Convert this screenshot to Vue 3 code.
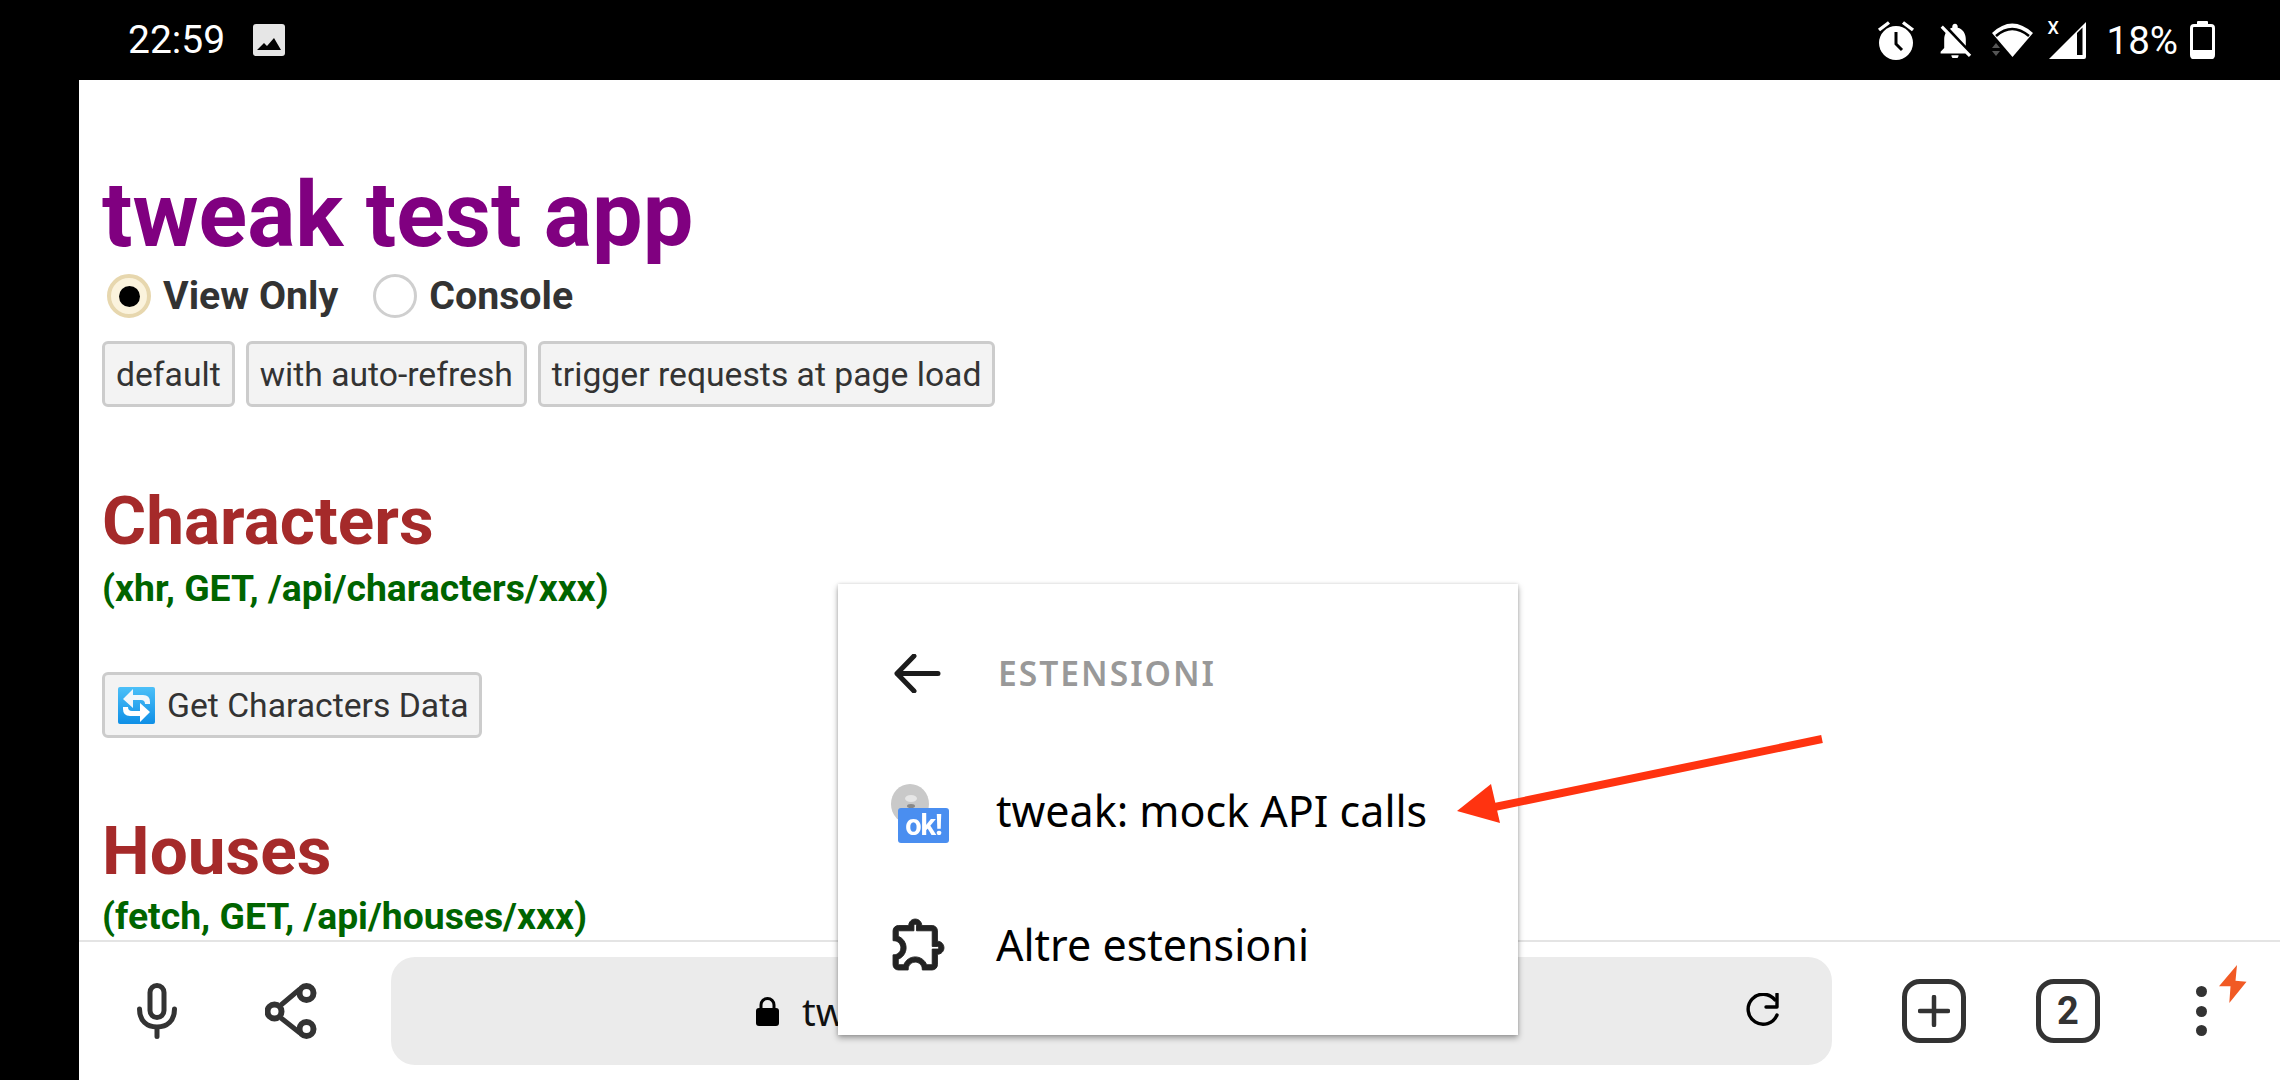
<script setup>
const presets = ['default', 'with auto-refresh', 'trigger requests at page load']
</script>

<template>
  <div class="screen">
    <header class="status">
      <span class="clock">22:59</span>
      <svg class="gallery" width="32" height="32" viewBox="0 0 32 32">
        <rect width="32" height="32" rx="3" fill="#e6e6e6" />
        <path d="M4 26 L11 19 L14 22 L21 14 L28 26 Z" fill="#000" />
      </svg>
      <div class="spacer"></div>
      <svg width="40" height="40" viewBox="0 0 40 40">
        <path d="M3 10 L13 2.5 M37 10 L27 2.5" stroke="#fff" stroke-width="3.4" fill="none" />
        <circle cx="20" cy="23" r="17" fill="#fff" />
        <path d="M20 12 V24 L26 30" stroke="#000" stroke-width="3" fill="none" />
      </svg>
      <svg class="bell" width="36" height="36" viewBox="2 1.5 20 20">
        <path fill="#fff" d="M20 18.69L7.84 6.14 5.27 3.49 4 4.76l2.8 2.8v.01c-.52.99-.8 2.16-.8 3.42v5l-2 2v1h13.73l2 2L21 19.72l-1-1.03zM12 22c1.11 0 2-.89 2-2h-4c0 1.11.89 2 2 2zm6-7.32V11c0-3.08-1.64-5.64-4.5-6.32V4c0-.83-.67-1.5-1.5-1.5s-1.5.67-1.5 1.5v.68c-.15.03-.29.08-.42.12-.1.03-.2.07-.3.11h-.01c-.2.08-.4.17-.59.27-.01 0-.01 0-.02.01L18 14.68z" />
      </svg>
      <svg class="wifi" width="44" height="36" viewBox="0 0 44 36">
        <path d="M1 11 Q21 -8 42 11 L21.5 35 Z" fill="#fff" />
        <path d="M5 14 Q21 0 38 14" stroke="#000" stroke-width="2.6" fill="none" />
        <path d="M1 26 L5 21 L9 26 Z M1 29 L9 29 L5 34 Z" fill="#555" />
      </svg>
      <div class="cell">
        <svg width="38" height="38" viewBox="0 0 38 38">
          <path fill-rule="evenodd" fill="#fff" d="M38 1 V36 Q38 38 36 38 H1 Z M29 12 V34 H34.5 V6.5 Z" />
        </svg>
        <span class="cell-x">X</span>
      </div>
      <span class="battery-text">18%</span>
      <svg width="25" height="38" viewBox="0 0 25 38">
        <rect x="7" y="0" width="11" height="6" rx="1" fill="#fff" />
        <rect x="1.5" y="4.5" width="22" height="32" rx="2.5" fill="none" stroke="#fff" stroke-width="3" />
        <rect x="1" y="29" width="23" height="9" rx="2" fill="#fff" />
      </svg>
    </header>

    <div class="body">
      <div class="gutter"></div>
      <div class="main">
        <section class="page">
          <h1>tweak test app</h1>
          <div class="modes">
            <span class="radio radio-on"><i></i></span>
            <span class="mode-label">View Only</span>
            <span class="radio"></span>
            <span class="mode-label">Console</span>
          </div>
          <div class="presets">
            <button v-for="p in presets" :key="p" class="btn">{{ p }}</button>
          </div>
          <h2 class="first">Characters</h2>
          <p class="sub">(xhr, GET, /api/characters/xxx)</p>
          <button class="btn btn-data">
            <svg width="37" height="37" viewBox="0 0 37 37">
              <defs>
                <linearGradient id="emoji-bg" x1="0" y1="0" x2="0" y2="1">
                  <stop offset="0" stop-color="#4cc0f8" />
                  <stop offset="1" stop-color="#0f8fe6" />
                </linearGradient>
              </defs>
              <rect width="37" height="37" rx="2" fill="url(#emoji-bg)" />
              <path d="M5 13 L15 3 V9 H25 Q32 9 32 16 V18 H27 Q27 14 23 14 H15 V22 Z" fill="#f2f7fb" transform="translate(0 -1)" />
              <path d="M32 24 L22 34 V28 H12 Q5 28 5 21 V19 H10 Q10 23 14 23 H22 V15 Z" fill="#fff" transform="translate(0 1)" />
            </svg>
            <span>Get Characters Data</span>
          </button>
          <h2 class="second">Houses</h2>
          <p class="sub sub-tight">(fetch, GET, /api/houses/xxx)</p>
        </section>

        <footer class="toolbar">
          <svg class="mic" width="40" height="56" viewBox="0 0 40 56">
            <rect x="13" y="2.5" width="14" height="32" rx="7" fill="none" stroke="#333" stroke-width="5" />
            <path d="M2.5 26 C2.5 38 10 44 20 44 C30 44 37.5 38 37.5 26 M20 44 V53.5" fill="none" stroke="#333" stroke-width="5" stroke-linecap="round" />
          </svg>
          <svg class="share" width="52" height="56" viewBox="0 0 52 56">
            <path d="M16 22 L35 6 M16 35 L35 50" stroke="#333" stroke-width="5" fill="none" />
            <circle cx="41.5" cy="10" r="7" fill="#fff" stroke="#333" stroke-width="6" />
            <circle cx="9.5" cy="28.5" r="7" fill="#fff" stroke="#333" stroke-width="6" />
            <circle cx="41.5" cy="46" r="7" fill="#fff" stroke="#333" stroke-width="6" />
          </svg>
          <div class="omnibox">
            <svg width="23" height="29" viewBox="0 0 23 29">
              <path d="M5 13 V8 A6.5 6.5 0 0 1 18 8 V13" fill="none" stroke="#000" stroke-width="3" />
              <rect x="0" y="11" width="23" height="18" rx="3" fill="#000" />
            </svg>
            <span class="url">tw</span>
            <svg class="reload" width="36" height="36" viewBox="0 0 36 36">
              <path d="M31 7 A15 15 0 1 0 33 22" fill="none" stroke="#000" stroke-width="3.4" stroke-linecap="round" />
              <path d="M33 1 V14 H22" fill="none" stroke="#000" stroke-width="3.4" stroke-linecap="round" stroke-linejoin="round" />
            </svg>
          </div>
          <div class="square plus">
            <svg width="32" height="32" viewBox="0 0 32 32">
              <path d="M16 2 V30 M2 16 H30" stroke="#333" stroke-width="4.5" stroke-linecap="round" />
            </svg>
          </div>
          <div class="square tabs">2</div>
          <div class="more">
            <span class="dot"></span><span class="dot"></span><span class="dot"></span>
          </div>
          <svg class="bolt" width="28" height="38" viewBox="0 0 28 38">
            <path d="M18 0 L0 21.3 L11.5 21.3 L10.3 38 L27.5 16.7 L16.5 15.7 Z" fill="#f15a24" />
          </svg>
        </footer>
      </div>
    </div>

    <div class="menu">
      <div class="menu-row menu-head">
        <svg class="menu-icon back" width="47" height="39" viewBox="0 0 47 39">
          <path d="M20 2 L3 19.5 L20 37 M3 19.5 H44" fill="none" stroke="#1c1c1c" stroke-width="5" stroke-linecap="round" stroke-linejoin="round" />
        </svg>
        <span class="menu-title">ESTENSIONI</span>
      </div>
      <div class="menu-row">
        <div class="ok-icon">
          <span class="ok-disc"><i class="ok-light"></i><i class="ok-dark"></i></span>
          <span class="ok-badge">ok!</span>
        </div>
        <span class="menu-text">tweak: mock API calls</span>
      </div>
      <div class="menu-row">
        <svg class="menu-icon" width="55" height="53" viewBox="1.6 2.1 20.3 20.3">
          <path fill="#222" stroke="#222" stroke-width=".35" d="M10.5 4.5c.28 0 .5.22.5.5v2h6v6h2c.28 0 .5.22.5.5s-.22.5-.5.5h-2v6h-2.12c-.68-1.75-2.39-3-4.38-3s-3.7 1.25-4.38 3H4v-2.12c1.75-.68 3-2.39 3-4.38 0-1.99-1.24-3.7-2.99-4.38L4 7h6V5c0-.28.22-.5.5-.5m0-2C9.12 2.5 8 3.62 8 5H4c-1.1 0-1.99.9-1.99 2v3.8h.29c1.49 0 2.7 1.21 2.7 2.7s-1.21 2.7-2.7 2.7H2V20c0 1.1.9 2 2 2h3.8v-.3c0-1.49 1.21-2.7 2.7-2.7s2.7 1.21 2.7 2.7v.3H17c1.1 0 2-.9 2-2v-4c1.38 0 2.5-1.12 2.5-2.5S20.38 11 19 11V7c0-1.1-.9-2-2-2h-4c0-1.38-1.12-2.5-2.5-2.5z" />
        </svg>
        <span class="menu-text">Altre estensioni</span>
      </div>
    </div>

    <svg class="arrow" width="380" height="100" viewBox="0 0 380 100">
      <path d="M367 4 L30 74" stroke="#ff3310" stroke-width="8" fill="none" />
      <path d="M2 76 L36 49 L45 88 Z" fill="#ff3310" />
    </svg>
  </div>
</template>

<style>
html, body { margin: 0; background: #000; }
</style>

<style scoped>
.screen {
  position: relative;
  width: 2280px;
  height: 1080px;
  overflow: hidden;
  display: flex;
  flex-direction: column;
  background: #000;
  font-family: Roboto, "Liberation Sans", sans-serif;
}
.status {
  height: 80px;
  flex: none;
  display: flex;
  align-items: center;
  padding-left: 128px;
  padding-right: 65px;
  box-sizing: border-box;
  color: #fff;
}
.clock { font-size: 39px; line-height: 80px; }
.gallery { margin-left: 28px; }
.spacer { flex: 1; }
.bell { margin-left: 21px; }
.wifi { margin-left: 18px; }
.cell { position: relative; margin-left: 13px; width: 38px; height: 38px; margin-right: 21px; }
.cell svg { display: block; }
.cell-x {
  position: absolute;
  left: 0;
  top: -2px;
  font-size: 18px;
  line-height: 18px;
  font-weight: 500;
}
.battery-text { font-size: 38.5px; margin-right: 12px; }
.body { flex: 1; display: flex; min-height: 0; }
.gutter { width: 79px; flex: none; background: #000; }
.main { flex: 1; display: flex; flex-direction: column; background: #fff; min-width: 0; }
.page {
  flex: 1;
  min-height: 0;
  overflow: hidden;
  padding: 90px 0 0 23px;
}
h1 {
  margin: 0;
  font-size: 90px;
  line-height: 92px;
  font-weight: 700;
  color: #800080;
}
.modes { display: flex; align-items: center; height: 44px; margin-top: 12px; }
.radio {
  width: 44px;
  height: 44px;
  box-sizing: border-box;
  margin-left: 5px;
  border: 3px solid #cfcfcf;
  border-radius: 50%;
  background: #fff;
  display: flex;
  align-items: center;
  justify-content: center;
}
.radio-on { border: 4px solid #e7d7ae; background: #fbf3dd; }
.radio-on i { width: 21px; height: 21px; border-radius: 50%; background: #000; }
.mode-label {
  font-size: 39.3px;
  font-weight: 700;
  color: #333;
  margin-left: 12px;
  margin-right: 30px;
}
.presets { display: flex; gap: 11px; margin-top: 23px; }
.btn {
  height: 66px;
  box-sizing: border-box;
  padding: 0 11px;
  border: 3px solid #ccc;
  border-radius: 6px;
  background: #f3f3f3;
  color: #333;
  font-family: Roboto, "Liberation Sans", sans-serif;
  font-size: 33.7px;
  display: flex;
  align-items: center;
}
h2 {
  margin: 0;
  font-size: 67.5px;
  line-height: 70px;
  font-weight: 700;
  color: #a52a2a;
}
.first { margin-top: 79px; }
.second { margin-top: 78px; }
.sub {
  margin: 12px 0 0;
  font-size: 37.3px;
  line-height: 40px;
  font-weight: 700;
  color: #006400;
}
.sub-tight { margin-top: 10px; }
.btn-data { margin-top: 64px; gap: 12px; padding: 0 10px 0 13px; }
.btn-data svg { flex: none; }
.toolbar {
  height: 140px;
  flex: none;
  box-sizing: border-box;
  border-top: 2px solid #e4e4e4;
  display: flex;
  align-items: center;
  background: #fff;
  padding-left: 58px;
  position: relative;
}
.share { margin-left: 88px; }
.omnibox {
  margin-left: 74px;
  width: 1441px;
  height: 108px;
  flex: none;
  border-radius: 24px;
  background: #ebebeb;
  display: flex;
  align-items: center;
  padding-left: 365px;
  padding-right: 52px;
  box-sizing: border-box;
}
.url { font-family: "Noto Sans", sans-serif; font-size: 38px; color: #111; margin-left: 23px; }
.reload { margin-left: auto; }
.square {
  width: 64px;
  height: 64px;
  box-sizing: border-box;
  border: 5px solid #333;
  border-radius: 18px;
  display: flex;
  align-items: center;
  justify-content: center;
  flex: none;
  background: #fff;
}
.plus { margin-left: 70px; }
.tabs {
  margin-left: 70px;
  color: #333;
  font-size: 38px;
  font-weight: 700;
}
.more {
  margin-left: 96px;
  display: flex;
  flex-direction: column;
  gap: 8.5px;
}
.dot { width: 11px; height: 11px; border-radius: 50%; background: #333; }
.bolt { margin-left: 12px; margin-top: -54px; }
.menu {
  position: absolute;
  left: 838px;
  top: 584px;
  width: 680px;
  height: 451px;
  background: #fff;
  box-shadow: 0 3px 6px rgba(0, 0, 0, .35), 0 0 3px rgba(0, 0, 0, .12);
  padding-top: 33px;
  box-sizing: border-box;
  display: flex;
  flex-direction: column;
}
.menu-row {
  height: 134px;
  display: flex;
  align-items: center;
  padding-left: 53px;
  position: relative;
}
.menu-head { height: 92px; margin-top: 10px; margin-bottom: 24px; }
.menu-icon { flex: none; }
.back { margin-left: 3px; }
.menu-title {
  position: absolute;
  left: 160px;
  font-family: "Noto Sans", sans-serif;
  font-size: 33.6px;
  font-weight: 600;
  letter-spacing: 2px;
  color: #999;
}
.menu-text {
  position: absolute;
  left: 158px;
  font-family: "Noto Sans", sans-serif;
  font-size: 43px;
  color: #000;
}
.ok-icon { position: relative; width: 60px; height: 60px; flex: none; margin-top: 8px; }
.ok-disc {
  position: absolute;
  left: 0;
  top: 0;
  width: 38px;
  height: 40px;
  border-radius: 50%;
  background: #c9c9c9;
  filter: blur(.7px);
}
.ok-light {
  position: absolute;
  left: 14px;
  top: 11px;
  width: 12px;
  height: 7px;
  border-radius: 50%;
  background: #e6e6e6;
}
.ok-dark {
  position: absolute;
  left: 16px;
  top: 20px;
  width: 8px;
  height: 4px;
  border-radius: 50%;
  background: #888;
}
.ok-badge {
  position: absolute;
  left: 7px;
  top: 24px;
  width: 51px;
  height: 35px;
  border-radius: 3px;
  background: #4a8ef0;
  color: #fff;
  font-size: 29px;
  font-weight: 700;
  line-height: 34px;
  text-align: center;
  letter-spacing: -1px;
  filter: blur(.6px);
}
.arrow { position: absolute; left: 1455px; top: 735px; }
</style>
